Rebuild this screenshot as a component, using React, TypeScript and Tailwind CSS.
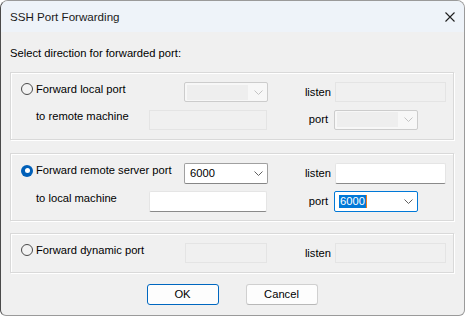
import React from "react";

const font = { fontFamily: '"Segoe UI", "Liberation Sans", Arial, sans-serif' };

function Chevron({ disabled }: { disabled?: boolean }) {
  return (
    <svg width="9" height="5" viewBox="0 0 9 5" className="shrink-0">
      <path d="M0.5 0.5 L4.5 4.5 L8.5 0.5" fill="none" stroke={disabled ? "#c4c4c4" : "#606060"} strokeWidth="1" />
    </svg>
  );
}

function Radio({ checked }: { checked?: boolean }) {
  if (checked) {
    return (
      <div className="w-[12px] h-[12px] rounded-full bg-[#005fb8] flex items-center justify-center shrink-0">
        <div className="w-[5px] h-[5px] rounded-full bg-white" />
      </div>
    );
  }
  return <div className="w-[12px] h-[12px] rounded-full border border-[#4b4b4b] bg-[#f3f3f3] shrink-0" />;
}

function DisabledCombo({ w }: { w: string }) {
  return (
    <div className={`${w} h-[20px] rounded-[2px] border border-[#cccccc] bg-[#f7f7f7] flex items-center pl-[2px] pr-[4px] justify-between`}>
      <div className="w-[61px] h-[15px] bg-[#eeeeee]" />
      <Chevron disabled />
    </div>
  );
}

function DisabledEdit({ w }: { w: string }) {
  return <div className={`${w} h-[20px] border border-[#e4e4e4] bg-[#f0f0f0]`} />;
}

function Edit({ w }: { w: string }) {
  return <div className={`${w} h-[21px] border border-[#e5e5e5] border-b-[#8a8a8a] bg-white rounded-[2px]`} />;
}

function Group({ children, className }: { children: React.ReactNode; className?: string }) {
  return (
    <div className={`border border-[#d9d9d9] shadow-[inset_1px_1px_0_#ffffff,1px_1px_0_#ffffff] flex flex-col pl-[10px] ${className ?? ""}`}>
      {children}
    </div>
  );
}

export default function App() {
  return (
    <div className="w-[466px] h-[317px] bg-white" style={font}>
      <div className="w-[465px] h-[316px] rounded-t-[8px] rounded-b-[6px] border border-[#9a9a9a] border-l-[#4a4a4a] bg-[#f0f0f0] flex flex-col overflow-hidden text-[11.2px] text-black">
        <div className="h-[31px] bg-[#eef3f9] flex items-center justify-between pl-[9px] pr-[9px] shrink-0">
          <span className="text-[11.6px] text-[#1a1a1a]">SSH Port Forwarding</span>
          <svg width="10" height="10" viewBox="0 0 10 10">
            <path d="M0.5 0.5 L9.5 9.5 M9.5 0.5 L0.5 9.5" stroke="#1f1f1f" strokeWidth="1.1" />
          </svg>
        </div>
        <div className="flex flex-col pl-[9px] pr-[10px]">
          <div className="h-[16px] mt-[13px] leading-[16px] text-[#000]">Select direction for forwarded port:</div>

          <Group className="mt-[11px] h-[68px] pt-[9px]">
            <div className="flex items-center h-[20px]">
              <div className="w-[163px] flex items-center gap-[3px] mb-[6px]">
                <Radio />
                <span>Forward local port</span>
              </div>
              <DisabledCombo w="w-[84px]" />
              <div className="w-[67px] text-right pr-[4px]">listen</div>
              <DisabledEdit w="w-[111px]" />
            </div>
            <div className="flex items-center h-[21px] mt-[7px]">
              <div className="w-[128px] pl-[15px] mb-[6px]">to remote machine</div>
              <DisabledEdit w="w-[118px]" />
              <div className="w-[67px] text-right pr-[6px]">port</div>
              <DisabledCombo w="w-[84px]" />
            </div>
          </Group>

          <Group className="mt-[13px] h-[68px] pt-[9px]">
            <div className="flex items-center h-[21px]">
              <div className="w-[163px] flex items-center gap-[3px] mb-[6px]">
                <Radio checked />
                <span>Forward remote server port</span>
              </div>
              <div className="w-[84px] h-[21px] rounded-[2px] border border-[#a0a0a0] border-b-[#868686] bg-white flex items-center justify-between pl-[5px] pr-[4px]">
                <span>6000</span>
                <Chevron />
              </div>
              <div className="w-[67px] text-right pr-[4px]">listen</div>
              <Edit w="w-[111px]" />
            </div>
            <div className="flex items-center h-[21px] mt-[7px]">
              <div className="w-[128px] pl-[15px] mb-[6px]">to local machine</div>
              <Edit w="w-[118px]" />
              <div className="w-[67px] text-right pr-[6px]">port</div>
              <div className="w-[84px] h-[21px] rounded-[2px] border border-[#0078d7] bg-white flex items-center justify-between pl-[4px] pr-[4px]">
                <div className="flex items-center">
                  <span className="bg-[#0078d7] text-white leading-[13px] px-[1px]">6000</span>
                  <div className="w-[1px] h-[13px] bg-[#f07a1a]" />
                </div>
                <Chevron />
              </div>
            </div>
          </Group>

          <Group className="mt-[12px] h-[40px] pt-[9px]">
            <div className="flex items-center h-[20px]">
              <div className="w-[164px] flex items-center gap-[3px] mb-[6px]">
                <Radio />
                <span>Forward dynamic port</span>
              </div>
              <DisabledEdit w="w-[82px]" />
              <div className="w-[68px] text-right pr-[4px]">listen</div>
              <DisabledEdit w="w-[111px]" />
            </div>
          </Group>

          <div className="flex justify-center gap-[27px] mt-[11px]">
            <div className="w-[72px] h-[21px] rounded-[3px] border border-[#0067c0] bg-[#fdfdfd] flex items-center justify-center">OK</div>
            <div className="w-[72px] h-[21px] rounded-[3px] border border-[#d0d0d0] border-b-[#b8b8b8] bg-[#fdfdfd] flex items-center justify-center">Cancel</div>
          </div>
        </div>
      </div>
    </div>
  );
}
